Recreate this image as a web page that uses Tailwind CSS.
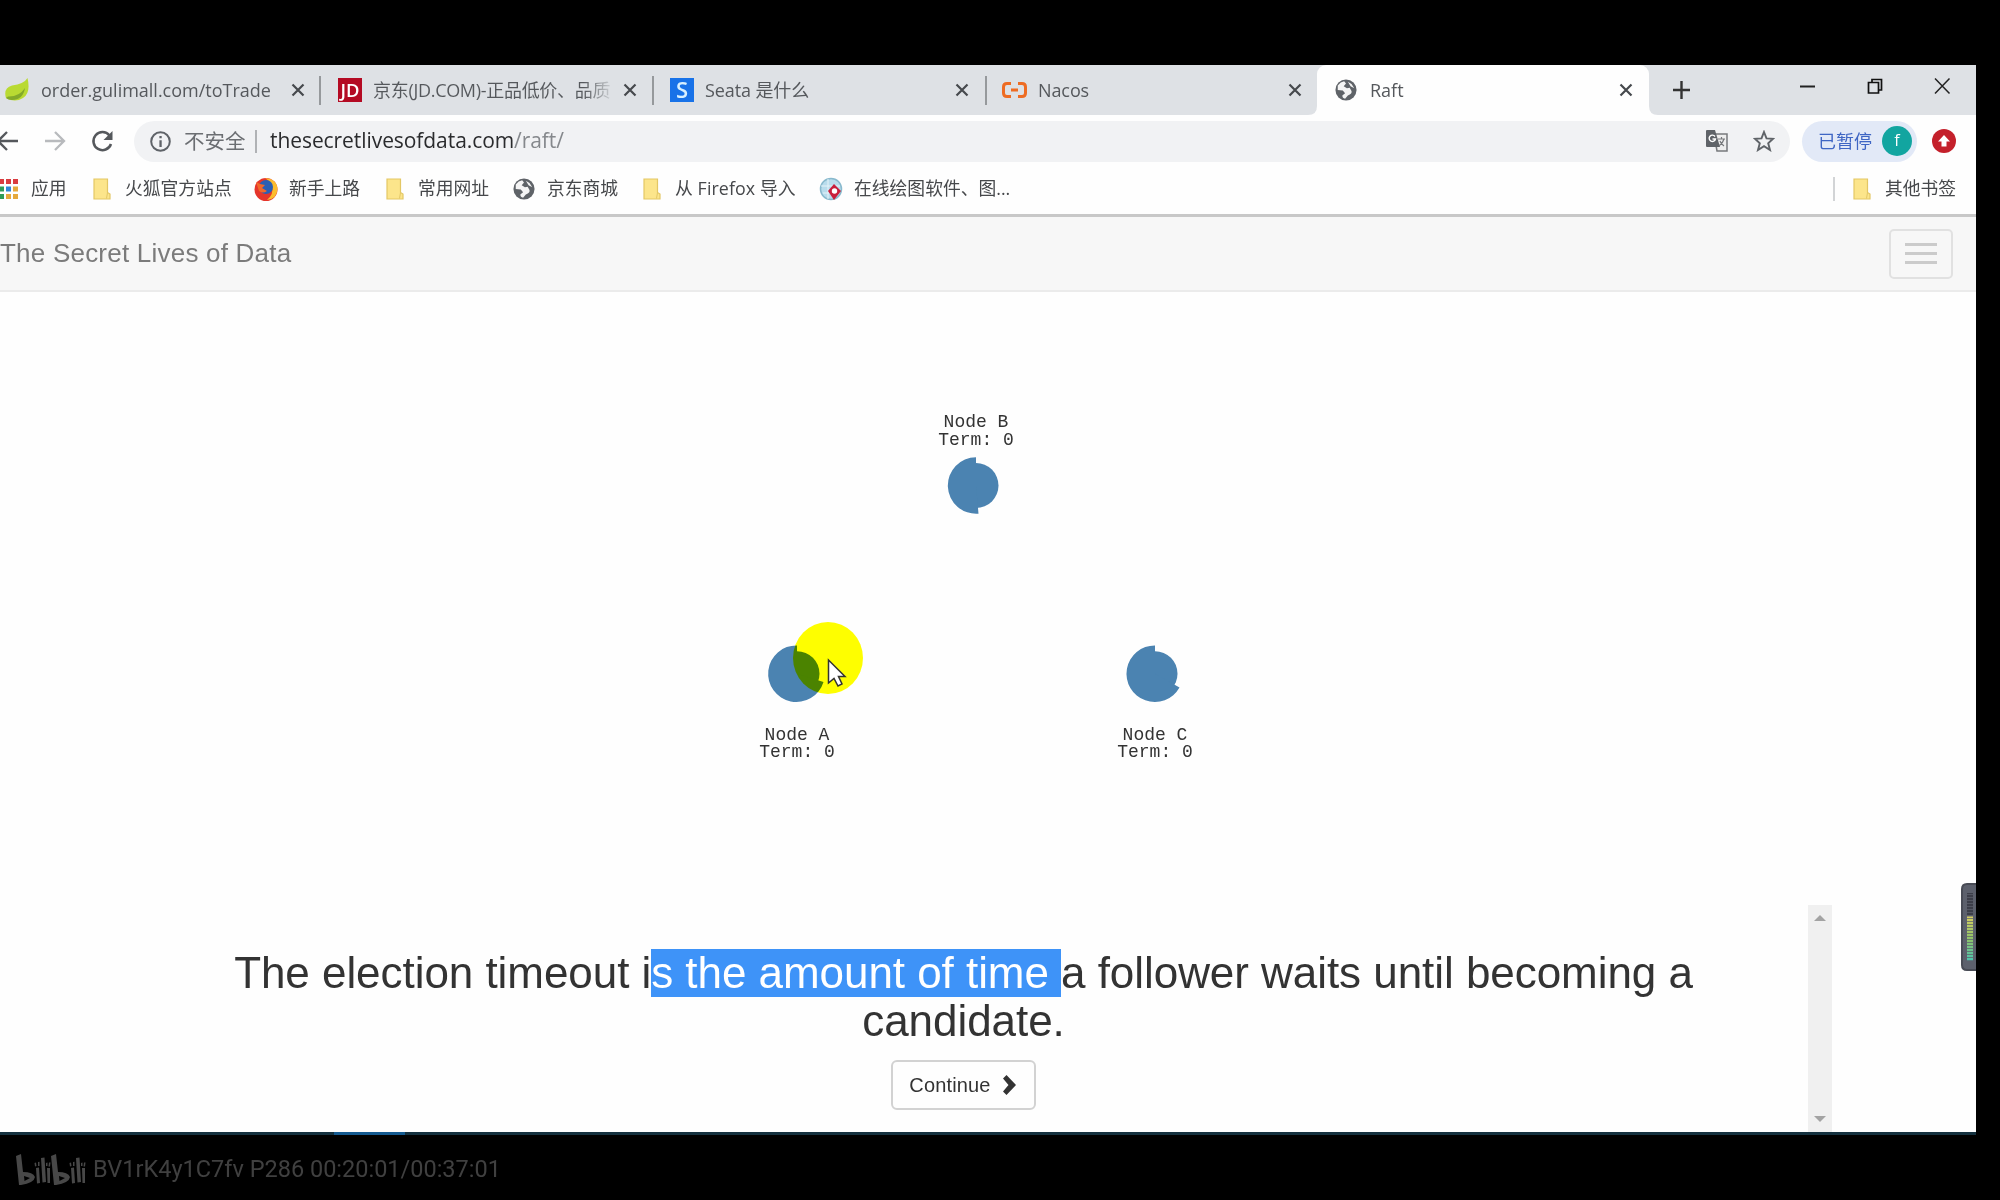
<!DOCTYPE html>
<html lang="zh-CN">
<head>
<meta charset="utf-8">
<title>Raft</title>
<script src="https://cdn.jsdelivr.net/npm/@tailwindcss/browser@4"></script>
</head>
<body class="w-[2000px] h-[1200px] overflow-hidden bg-black pt-[65px] font-['Open_Sans','Noto_Sans_CJK_SC',sans-serif]">
<svg class="hidden">
  <symbol id="globe" viewBox="0 0 24 24"><circle cx="12" cy="12" r="11.500" fill="#5f6368"/><path d="M3 7Q6 3 10 2.500L12 5L9.500 8L13 10L16 9.500L18 13Q19 16 14 18L11 21.500Q8 21 8 18L11 15.500L8.500 12.500L3 12Z" fill="#f4f4f4"/><path d="M14 3L18 5.500L21 10L17 8Z" fill="#f4f4f4"/></symbol>
  <symbol id="close" viewBox="0 0 14 14"><path d="M1.500 1.500L12.500 12.500M12.500 1.500L1.500 12.500" stroke="#46494d" stroke-width="2.200" fill="none"/></symbol>
  <symbol id="folder" viewBox="0 0 18 22"><path d="M1 1H14.500V14.500L17 16V21H1Z" fill="#fce58b" stroke="#e3c765" stroke-width="1.200"/><path d="M14.500 14.500L13.500 20.500" stroke="#e3c765"/></symbol>
</svg>
<main class="w-[1976px] h-[1070px] bg-[#fefefe] flex flex-col overflow-hidden">
  <!-- tab strip -->
  <div class="h-[50px] shrink-0 bg-[#dee1e5] flex text-[18px] text-[#55585c] leading-[50px] whitespace-nowrap">
    <div class="w-[321px] flex items-center pl-[5px]">
      <svg class="w-6 h-6" viewBox="0 0 24 24"><path d="M1 20Q-2 10 7 7.500Q19 6 22.500 0Q26 15 18 20Q10 25 1 20Z" fill="#b9da32"/><path d="M3 18.500Q14 19 20 10Q18 22 7 22Q3 22 1 20Z" fill="#83a92a"/></svg>
      <span class="ml-3 w-[232px] tracking-[-0.01px]">order.gulimall.com/toTrade</span>
      <svg class="ml-[18px] w-[14px] h-[14px]"><use href="#close"/></svg>
      <i class="ml-auto w-[2px] h-[29px] bg-[#96999c]"></i>
    </div>
    <div class="w-[333px] flex items-center pl-[17px]">
      <svg class="w-6 h-6" viewBox="0 0 24 24"><path d="M0 0H24V24H0Z" fill="#b40a23"/><text x="2.500" y="18.500" font-size="17.500" font-family="Open Sans" font-weight="600" fill="#fff" textLength="19" lengthAdjust="spacingAndGlyphs">JD</text></svg>
      <span class="ml-[11px] w-[239px] overflow-hidden tracking-[-0.3px] bg-gradient-to-r from-[#55585c] from-88% to-[#55585c]/10 bg-clip-text text-transparent">京东(JD.COM)-正品低价、品质</span>
      <svg class="ml-[11px] w-[14px] h-[14px]"><use href="#close"/></svg>
      <i class="ml-auto w-[2px] h-[29px] bg-[#96999c]"></i>
    </div>
    <div class="w-[333px] flex items-center pl-4">
      <svg class="w-6 h-6" viewBox="0 0 24 24"><path d="M0 0H24V24H0Z" fill="#1872e8"/><text x="6" y="20" font-size="22" font-family="Open Sans" font-weight="600" fill="#d8f0ff">S</text></svg>
      <span class="ml-[11px] w-[220px] tracking-[-0.1px]">Seata 是什么</span>
      <svg class="ml-auto mr-[16px] w-[14px] h-[14px]"><use href="#close"/></svg>
      <i class="w-[2px] h-[29px] bg-[#96999c]"></i>
    </div>
    <div class="w-[330px] flex items-center pl-[15px]">
      <svg class="w-[25px] h-4" viewBox="0 0 25 16" fill="none" stroke="#ee6c23" stroke-width="3"><path d="M9 1.500H5Q1.500 1.500 1.500 5V11Q1.500 14.500 5 14.500H9M16 1.500H20Q23.500 1.500 23.500 5V11Q23.500 14.500 20 14.500H16M9 8H16"/></svg>
      <span class="ml-[11px] tracking-[-0.1px]">Nacos</span>
      <svg class="ml-auto mr-[15px] w-[14px] h-[14px]"><use href="#close"/></svg>
    </div>
    <div class="w-[332px] relative bg-[#fefefe] rounded-t-[9px] flex items-center pl-[18px]">
      <svg class="absolute bottom-0 -left-[9px] size-[9px]" viewBox="0 0 9 9"><path d="M9 0V9H0Q9 9 9 0Z" fill="#fefefe"/></svg>
      <svg class="absolute bottom-0 -right-[9px] size-[9px]" viewBox="0 0 9 9"><path d="M0 0V9H9Q0 9 0 0Z" fill="#fefefe"/></svg>
      <svg class="w-[22px] h-[22px]"><use href="#globe"/></svg>
      <span class="ml-[13px]">Raft</span>
      <svg class="ml-auto mr-4 w-[14px] h-[14px]"><use href="#close"/></svg>
    </div>
    <svg class="w-[327px] h-[50px]" viewBox="1649 65 327 50" fill="none" stroke="#333"><path d="M1673 90H1690M1681.500 81V99" stroke-width="2.400"/><path d="M1800 86.500H1815" stroke="#222" stroke-width="2"/><path d="M1868.500 82.500H1878.500V93H1868.500ZM1872 82V79.500H1881.500V90H1879" stroke="#111" stroke-width="1.700"/><path d="M1935 78.500L1949.500 93.500M1949.500 78.500L1935 93.500" stroke="#222" stroke-width="1.500"/></svg>
  </div>
  <!-- address bar -->
  <div class="h-[52px] shrink-0 flex items-center text-[19px] whitespace-nowrap">
    <svg class="w-[134px] h-[52px]" viewBox="0 115 134 52" fill="none" stroke-width="2.300"><path d="M-2 141H18M7 132L-2 141L7 150" stroke="#55585c"/><path d="M45 141H64M55 132L64 141L55 150" stroke="#b8babd"/><path d="M109.500 135.500A9 9 0 1 0 111 144" stroke="#55585c" stroke-width="2.500"/><path d="M112.500 131V140H103.500Z" fill="#55585c"/></svg>
    <div class="w-[1656px] h-[41px] rounded-full bg-[#f1f2f4] flex items-center pl-4">
      <svg class="w-[21px] h-[21px]" viewBox="0 0 21 21"><circle cx="10.500" cy="10.500" r="9.300" fill="none" stroke="#5f6368" stroke-width="2"/><path d="M9.400 9.300H11.700V16H9.400ZM9.400 5H11.700V7.300H9.400Z" fill="#5f6368"/></svg>
      <span class="ml-[13px] w-[62px] text-[20.5px] text-[#6b6e72]">不安全</span>
      <i class="ml-[9px] w-[2px] h-[23px] bg-[#b0b2b5]"></i>
      <span class="ml-[13px] text-[21px] text-[#2a2b2d] tracking-[-0.07px]">thesecretlivesofdata.com<span class="text-[#85888c]">/raft/</span></span>
      <svg class="ml-auto w-[22px] h-[22px]" viewBox="0 0 22 22"><path d="M8 4H21V21H11Z" fill="#eee" stroke="#77797c" stroke-width="1.500"/><path d="M1 0H9L14 17H1Q0 17 0 16V1Q0 0 1 0Z" fill="#5f6368"/><path d="M9 6.500A3.200 3.200 0 1 0 9.500 9H6.500" stroke="#fff" stroke-width="1.400" fill="none"/><path d="M12 9H19M15.500 7V9M18 9Q17 13 13 16M14 11Q15 14 18 16" stroke="#77797c" stroke-width="1.200" fill="none"/></svg>
      <svg class="ml-[25px] mr-[15px] w-[22px] h-[22px]" viewBox="0 0 22 22"><path d="M11 2L13.500 8.400L20 8.800L15.200 13.200L17 20L11 16.200L5 20L6.800 13.200L2 8.800L8.500 8.400Z" fill="none" stroke="#5f6368" stroke-width="1.900"/></svg>
    </div>
    <div class="ml-3 w-[115px] h-[41px] rounded-full bg-[#e2e9f7] flex items-center pl-4 text-[18px] text-[#3f66c4]"><span class="w-[54px]">已暂停</span><span class="ml-[10px] w-[30px] h-[30px] rounded-full bg-[#12a5a0] text-white text-[16px] leading-[29px] text-center">f</span></div>
    <svg class="ml-[15px] w-6 h-6" viewBox="0 0 24 24"><circle cx="12" cy="12" r="12" fill="#c4202b"/><path d="M12 6L18 12.500H14.500V17.500H9.500V12.500H6Z" fill="#fff"/></svg>
  </div>
  <!-- bookmarks -->
  <div class="h-[47px] shrink-0 flex items-center pb-[4px] text-[17.8px] text-[#46484b] whitespace-nowrap">
    <svg class="w-[18px] h-5" viewBox="0 0 18 20"><path d="M-1 0H4V5H-1ZM6 0H11V5H6ZM13 0H18V5H13Z" fill="#d93c40"/><path d="M-1 7.500H4V12.500H-1Z" fill="#2f9b57"/><path d="M6 7.500H11V12.500H6Z" fill="#2d86d8"/><path d="M13 7.500H18V12.500H13ZM6 15H11V20H6ZM13 15H18V20H13Z" fill="#e5a93c"/><path d="M-1 15H4V20H-1Z" fill="#2f9b57"/></svg>
    <span class="ml-[13px] w-[62px]">应用</span>
    <svg class="w-[18px] h-[22px]"><use href="#folder"/></svg><span class="ml-[14px] w-[129px]">火狐官方站点</span>
    <svg class="w-6 h-6" viewBox="0 0 24 24"><circle cx="12" cy="12.500" r="11.500" fill="#e5352b"/><path d="M11 1Q23 2 23.500 12Q23 22 13 23Q20 17 18 10Q16 4 11 1Z" fill="#fbbd2d"/><circle cx="12" cy="10" r="7" fill="#2a5fb4"/><path d="M2 5L6 7L11 8L8 11L13 14Q9 17 5 14Z" fill="#f2682a"/></svg><span class="ml-[11px] w-[97px]">新手上路</span>
    <svg class="w-[18px] h-[22px]"><use href="#folder"/></svg><span class="ml-[14px] w-[95px]">常用网址</span>
    <svg class="w-[22px] h-[22px]"><use href="#globe"/></svg><span class="ml-[12px] w-[96px]">京东商城</span>
    <svg class="w-[18px] h-[22px]"><use href="#folder"/></svg><span class="ml-[14px] w-[144px] tracking-[0.1px]">从 Firefox 导入</span>
    <svg class="w-[24px] h-6" viewBox="0 0 24 24"><circle cx="12" cy="12" r="10.500" fill="#b9dcec" stroke="#88b9cd" stroke-width="1.500"/><path d="M2 9H21M9 2V22M4 16H18" stroke="#e5f3f9"/><path d="M15 7L22 14L15 23L9 14Z" fill="#c91f3b"/><circle cx="15.500" cy="14" r="2.700" fill="#fff"/></svg><span class="ml-[11px]">在线绘图软件、图...</span>
    <i class="ml-auto w-[2px] h-[24px] bg-[#d2d4d6]"></i>
    <svg class="ml-[18px] w-[18px] h-[22px]"><use href="#folder"/></svg><span class="ml-[14px] mr-[20px] w-[71px]">其他书签</span>
  </div>
  <!-- site navbar -->
  <div class="h-[78px] shrink-0 border-t-[3px] border-t-[#c8c8c8] border-b-2 border-b-[#ebebeb] bg-[#f7f7f7] flex items-center justify-between pr-[23px] font-['Liberation_Sans',Arial,sans-serif] text-[26px] text-[#7b7b7b]">
    <span class="tracking-[0.22px]">The Secret Lives of Data</span>
    <div class="w-[64px] h-[50px] border-2 border-[#e1e1e1] rounded-[5px] flex flex-col items-center justify-center gap-[6px]"><i class="w-8 h-[3px] bg-[#cbcbcb]"></i><i class="w-8 h-[3px] bg-[#cbcbcb]"></i><i class="w-8 h-[3px] bg-[#cbcbcb]"></i></div>
  </div>
  <!-- cluster diagram -->
  <div class="h-[613px] shrink-0 relative">
    <svg class="w-[1976px] h-[612px]" viewBox="0 292 1976 612" fill="#4b83b1" font-family="Liberation Mono, monospace" font-size="18">
      <circle cx="976" cy="485.500" r="22.500"/><path d="M976 485.500V457.200A28.300 28.300 0 1 0 978.500 513.700Z"/>
      <circle cx="797" cy="673.700" r="22.500"/><path d="M797 673.700V645.400A28.300 28.300 0 1 0 823.500 682Z"/>
      <circle cx="1155" cy="673.700" r="22.500"/><path d="M1155 673.700V645.400A28.300 28.300 0 1 0 1179.500 687.500Z"/>
      <g fill="#333" text-anchor="middle"><text x="976" y="427">Node B</text><text x="976" y="445">Term: 0</text><text x="797" y="739.500">Node A</text><text x="797" y="757">Term: 0</text><text x="1155" y="739.500">Node C</text><text x="1155" y="757">Term: 0</text></g>
      <ellipse class="mix-blend-multiply" cx="828" cy="658" rx="35" ry="36" fill="#ffff00"/>
      <path d="M828.500 660V683L834 678.500L838 686L842 684L838.500 676.500H845Z" fill="#fff" stroke="#333" stroke-width="1.500"/>
    </svg>
    <svg class="absolute left-[1961px] top-[591px] w-[15px] h-[88px] z-10" viewBox="0 0 15 88"><path d="M16 1H6Q1 1 1 6V82Q1 87 6 87H16Z" fill="#5c606c" stroke="#484b55" stroke-width="2"/><defs><linearGradient id="lv" x2="0" y2="1"><stop stop-color="#d6cf62"/><stop offset=".5" stop-color="#8fc26a"/><stop offset="1" stop-color="#4cc4b0"/></linearGradient></defs><path d="M6 10H12V32H6Z" fill="#3c3e49"/><path d="M6 33.500H12V78H6Z" fill="url(#lv)"/><path d="M9 11V78" stroke="#5c606c" stroke-opacity=".75" stroke-width="6" stroke-dasharray="1 2"/></svg>
  </div>
  <!-- caption -->
  <div class="h-[227px] shrink-0 flex font-['Liberation_Sans',Arial,sans-serif] text-[#333]">
    <div class="w-[1687px] ml-[120px] pt-[44px] flex flex-col items-center">
      <p class="text-[44px] leading-[48px] tracking-[-0.05px] text-center whitespace-nowrap">The election timeout i<span class="bg-[#3e93f8] text-white inline-block h-[48px] whitespace-pre">s the amount of time </span>a follower waits until becoming a<br>candidate.</p>
      <div class="mt-[15px] mr-px w-[145px] h-[50px] border-2 border-[#d2d2d2] rounded-[6px] flex items-center justify-center text-[20px] tracking-[0.15px]">Continue<svg class="ml-[10px] w-4 h-5" viewBox="0 0 16 20"><path d="M2 3.500L5.500 0L15 10L5.500 20L2 16.500L7.500 10Z" fill="#333"/></svg></div>
    </div>
    <div class="ml-px w-6 bg-[#f0f0f0] flex flex-col justify-between items-center pt-[10px] pb-[10px]"><svg class="w-3 h-[6px]" viewBox="0 0 12 6"><path d="M0 6L6 0L12 6Z" fill="#a3a3a3"/></svg><svg class="w-3 h-[6px]" viewBox="0 0 12 6"><path d="M0 0L6 6L12 0Z" fill="#a3a3a3"/></svg></div>
  </div>
  <div class="h-[3px] shrink-0 bg-[#14313f] pl-[334px]"><div class="w-[71px] h-[3px] bg-[#145a90]"></div></div>
</main>
<!-- video watermark -->
<footer class="h-[65px] flex items-center pl-4 pt-[4px] text-[#404040] font-[Roboto,sans-serif] text-[23.5px]">
  <svg class="w-[70px] h-8" viewBox="0 0 70 32" fill="#484848"><g id="bili"><path fill-rule="evenodd" d="M0 2L5 0L7 18Q17 18 19 23Q18 29 5 31H3ZM8 22L8.500 27L14 24Z"/><path d="M20 14L23 13.500L24 29L21 29.500ZM25 4L28.500 3.500L30 28L26.500 28.500ZM31 14L34 14V29L31.500 29ZM18.500 9L20 8.500L20.500 12L19 12.500ZM22 8L23.500 7.800V12H22ZM30 9L31.500 8.500V12H30ZM33 8.500H34.500L34 12.500H32.500Z"/></g><use href="#bili" x="35"/></svg>
  <span class="ml-[7px] pt-px whitespace-nowrap">BV1rK4y1C7fv P286 00:20:01/00:37:01</span>
</footer>
</body>
</html>
